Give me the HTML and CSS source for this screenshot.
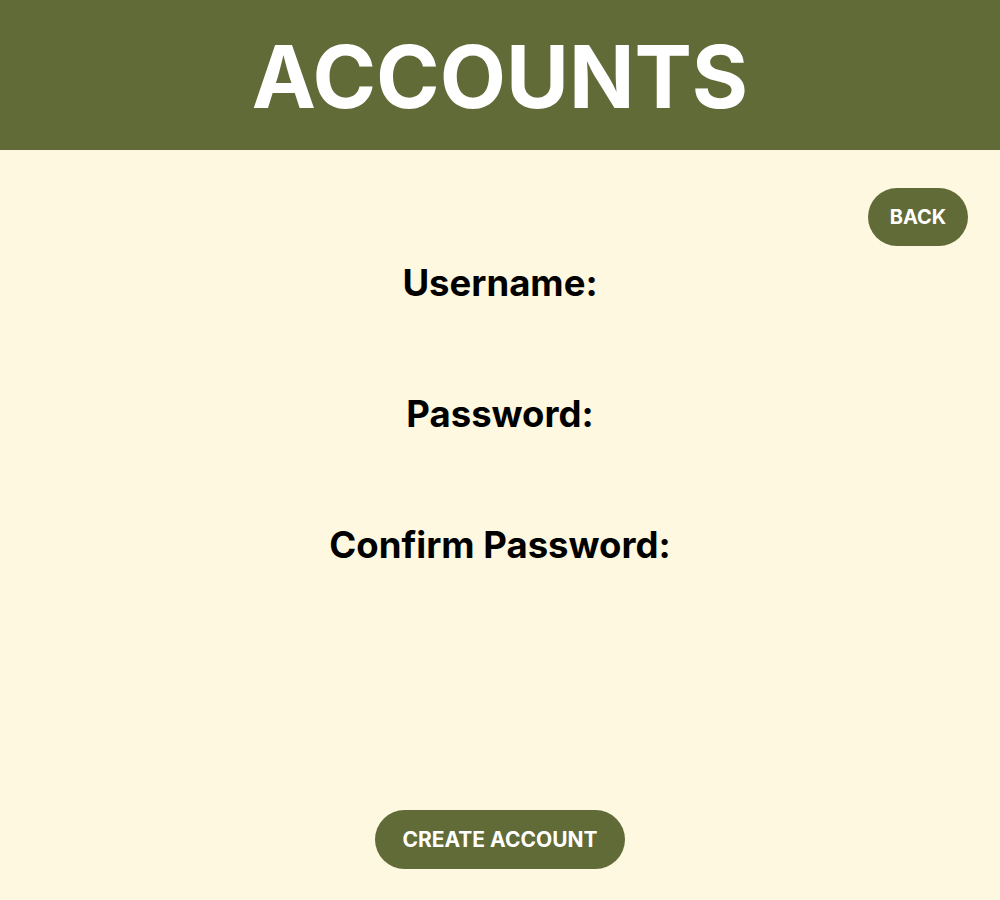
FILE: index.html
```html
<!DOCTYPE html>
<html>
<head>
<meta charset="utf-8">
<link rel="stylesheet" href="styles.css">
</head>
<body>
<header class="top">
  <h1 class="title">ACCOUNTS</h1>
</header>
<main class="content">
  <div class="back-row"><button class="pill back">BACK</button></div>
  <div class="fields">
    <div class="label">Username:</div>
    <div class="label">Password:</div>
    <div class="label">Confirm Password:</div>
  </div>
  <div class="actions"><button class="pill create">CREATE ACCOUNT</button></div>
</main>
</body>
</html>
```
FILE: styles.css
```css
html, body {
  margin: 0;
  padding: 0;
  height: 100%;
}
body {
  background: #fdf8df;
  font-family: "Inter", "Open Sans", sans-serif;
  width: 1000px;
  height: 900px;
  overflow: hidden;
}
.top {
  background: #616b38;
  height: 150px;
  display: flex;
  align-items: center;
  justify-content: center;
}
.title {
  margin: 0;
  color: #ffffff;
  font-size: 86px;
  font-weight: 700;
  letter-spacing: 0;
  line-height: 1;
  padding-top: 3px;
}
.content {
  display: flex;
  flex-direction: column;
  height: 750px;
}
.back-row {
  display: flex;
  justify-content: flex-end;
  padding: 38px 32px 0 0;
}
.pill {
  background: #616b38;
  color: #ffffff;
  border: none;
  border-radius: 30px;
  font-family: inherit;
  font-weight: 700;
  display: flex;
  align-items: center;
  justify-content: center;
  padding: 0;
}
.back {
  width: 100px;
  height: 58px;
  font-size: 20px;
}
.fields {
  display: flex;
  flex-direction: column;
  align-items: center;
  gap: 87px;
  margin-top: 15px;
}
.label {
  font-size: 36.5px;
  font-weight: 700;
  color: #000;
  line-height: 44px;
}
.actions {
  margin-top: auto;
  display: flex;
  justify-content: center;
  padding-bottom: 31px;
}
.create {
  width: 250px;
  height: 59px;
  font-size: 21px;
}
```
